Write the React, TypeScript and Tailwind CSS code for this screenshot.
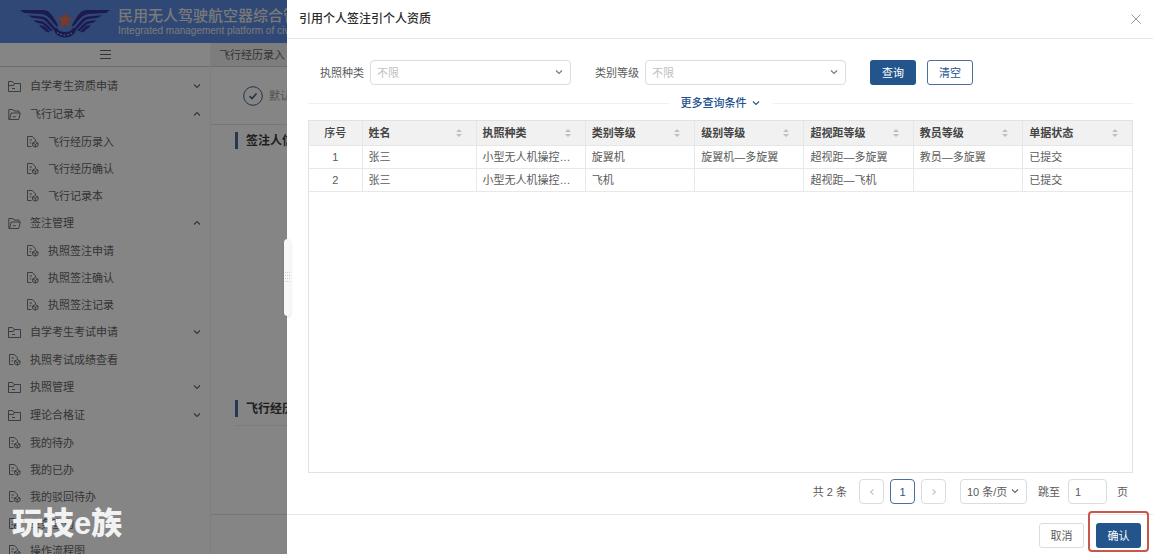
import React, { useState } from "react";

type MenuItem = {
  label: string;
  open?: boolean;
  folder?: boolean;
  children?: string[];
};

const menu: MenuItem[] = [
  { label: "自学考生资质申请", folder: true },
  {
    label: "飞行记录本",
    folder: true,
    open: true,
    children: ["飞行经历录入", "飞行经历确认", "飞行记录本"],
  },
  {
    label: "签注管理",
    folder: true,
    open: true,
    children: ["执照签注申请", "执照签注确认", "执照签注记录"],
  },
  { label: "自学考生考试申请", folder: true },
  { label: "执照考试成绩查看" },
  { label: "执照管理", folder: true },
  { label: "理论合格证", folder: true },
  { label: "我的待办" },
  { label: "我的已办" },
  { label: "我的驳回待办" },
  { label: "业务查询" },
  { label: "操作流程图" },
];

const columns = ["姓名", "执照种类", "类别等级", "级别等级", "超视距等级", "教员等级", "单据状态"];

const rows = [
  ["张三", "小型无人机操控员执照", "旋翼机", "旋翼机—多旋翼", "超视距—多旋翼", "教员—多旋翼", "已提交"],
  ["张三", "小型无人机操控员执照", "飞机", "", "超视距—飞机", "", "已提交"],
];

const Chevron = ({ dir = "down", className = "" }: { dir?: "down" | "up" | "left" | "right"; className?: string }) => {
  const paths = {
    down: "M2 3.500 5 6.500 8 3.500",
    up: "M2 6.500 5 3.500 8 6.500",
    left: "M6.500 2.500 3.500 5 6.500 7.500",
    right: "M3.500 2.500 6.500 5 3.500 7.500",
  };
  return (
    <svg viewBox="0 0 10 10" className={`h-2.5 w-2.5 shrink-0 ${className}`} fill="none" stroke="currentColor" strokeWidth="1.1">
      <path d={paths[dir]} />
    </svg>
  );
};

const FolderIcon = ({ open }: { open?: boolean }) => (
  <svg viewBox="0 0 13 13" className="h-[13px] w-[13px] shrink-0" fill="none" stroke="currentColor" strokeWidth="0.9">
    {open ? (
      <path d="M1.500 11.500h9.200l1.600-6.500H3.200L1.500 11.500H.8V1.500h4L6 3h5v2M4.800 8.800h3" />
    ) : (
      <path d="M.5 11.500v-10h4l1.500 2h6.500v8zM.5 5.500h5l1-2M4 8.500h3" />
    )}
  </svg>
);

const DocIcon = () => (
  <svg viewBox="0 0 13 13" className="h-[13px] w-[13px] shrink-0" fill="none" stroke="currentColor" strokeWidth="0.9">
    <path d="M5.500 11.500H1.500v-10h4.700L9.500 4.700V6M3.500 5h2.500M3.500 7.800h1.800" />
    <path d="M9.300 6.600 12 8v2.800l-2.700 1.400-2.700-1.400V8zM6.800 8.100l2.500 1.300 2.500-1.300M9.300 9.400v2.600" />
  </svg>
);

const Wing = () => (
  <>
    <path d="M0 1h23c6 0 9 5 12 10l3 5-1 2c-5-5-8-12-15-13L4 4z" />
    <path d="M8 6.200l14 1.300c6 1 9 7 13 11l-1 2c-5-3-7-9-12-10.500l-10-1.300z" />
    <path d="M14 11l8 1.200c4 1 7 6 11 8.800l-2 1.200c-4-2-6-6.400-10-7.700l-5-1z" />
    <path d="M19 15.800l4 1c3 1 4 4 7 5.700l-2 1c-3-1-5-4-7-5z" />
  </>
);

const Logo = () => (
  <svg viewBox="0 0 90 30" className="mt-1 h-[30px] w-[90px] shrink-0">
    <g fill="#34349a">
      <Wing />
      <g transform="matrix(-1 0 0 1 90 0)">
        <Wing />
      </g>
      <path d="M33.500 19l3.500 0c2 3 4.500 4 8 4s6-1 8-4h3.500c-1 6-5 9.500-11.500 9.500S34.500 25 33.500 19z" />
    </g>
    <path d="M37 23.500c5 3.500 11 3.500 16 0" fill="none" stroke="#8f9fd4" strokeWidth="1.200" strokeDasharray="2 1.500" />
    <path d="M45 3l2.300 5.500h5.700l-4.500 4 1.800 6.500-5.300-3.500-5.300 3.500 1.800-6.500-4.500-4h5.700z" fill="#ea6b4c" />
  </svg>
);

const SortIcon = () => (
  <svg viewBox="0 0 8 10" className="h-2.5 w-2 shrink-0" fill="#bfbfbf">
    <path d="M4 1l3 3H1zM4 9 1 6h6z" />
  </svg>
);

const SectionTitle = ({ children }: { children: React.ReactNode }) => (
  <h2 className="flex h-[17px] items-center gap-2 whitespace-nowrap text-xs font-bold text-[#3a3a3a]">
    <span className="h-full w-[3px] shrink-0 bg-[#4a6a9a]" />
    {children}
  </h2>
);

const FilterSelect = ({ id, label }: { id: string; label: string }) => (
  <div className="flex items-center gap-1.5">
    <label htmlFor={id} className="whitespace-nowrap">
      {label}
    </label>
    <div className="relative w-[201px]">
      <select
        id={id}
        className="block h-[25px] w-full appearance-none rounded-[4px] border border-[#dcdcdc] bg-white pr-6 pl-1.5 text-[#bfbfbf] outline-none"
      >
        <option>不限</option>
      </select>
      <Chevron className="pointer-events-none absolute top-[7px] right-[7px] text-[#777]" />
    </div>
  </div>
);

const Sidebar = () => (
  <aside className="w-[211px] shrink-0 border-r border-[#f4f4f4]">
    <div className="flex h-6 items-center justify-center border-b border-[#d4d4d4]">
      <button aria-label="折叠菜单">
        <svg viewBox="0 0 11 11" className="h-[11px] w-[11px]" stroke="#666" strokeWidth="1">
          <path d="M0 1.500h11M0 5.500h11M0 9.500h11" />
        </svg>
      </button>
    </div>
    <ul className="pt-[5px] text-[#666]">
      {menu.map((item) => (
        <li key={item.label}>
          <a href="#" className={`flex items-center gap-[9px] pr-2 pl-2 ${item.folder ? "h-7" : "h-[27px]"}`}>
            {item.folder ? <FolderIcon open={item.open} /> : <DocIcon />}
            <span className="flex-1">{item.label}</span>
            {item.folder && <Chevron dir={item.open ? "up" : "down"} />}
          </a>
          {item.children && (
            <ul>
              {item.children.map((child) => (
                <li key={child}>
                  <a href="#" className="flex h-[27px] items-center gap-[9px] pl-[26px]">
                    <DocIcon />
                    {child}
                  </a>
                </li>
              ))}
            </ul>
          )}
        </li>
      ))}
    </ul>
  </aside>
);

const Background = () => (
  <div className="flex h-full flex-col">
    <header className="flex h-[43px] shrink-0 items-center gap-2 bg-[#5b8ae0] pl-5 text-[#e8e8e8]">
      <Logo />
      <div className="whitespace-nowrap">
        <h1 className="text-[15px] leading-[18px] font-medium">民用无人驾驶航空器综合管理平台</h1>
        <p className="text-[10px] leading-3">Integrated management platform of civil unmanned aircraft</p>
      </div>
    </header>
    <div className="flex min-h-0 flex-1">
      <Sidebar />
      <main className="flex min-w-0 flex-1 flex-col">
        <nav className="flex h-6 shrink-0 items-center border-b border-[#d4d4d4] bg-[#f0f0f0] pl-2 text-[#666]">
          <a href="#">飞行经历录入</a>
        </nav>
        <div className="flex h-[58px] shrink-0 items-center gap-1.5 border-b border-[#e4e4e4] pl-8 text-[#999]">
          <svg viewBox="0 0 20 20" className="h-5 w-5" fill="none" stroke="#4a5f85">
            <circle cx="10" cy="10" r="9.300" />
            <path d="M6.500 10.200 9 12.500 13.500 7.500" strokeWidth="1.600" />
          </svg>
          默认审批流程
        </div>
        <div className="flex-1 pt-[7px] pl-6">
          <SectionTitle>签注人信息</SectionTitle>
          <div className="h-[251px]" />
          <SectionTitle>飞行经历信息</SectionTitle>
          <hr className="mt-2 border-[#eeeeee]" />
        </div>
        <div className="h-10 shrink-0 border-t border-[#e4e4e4]" />
      </main>
    </div>
  </div>
);

const ResultTable = () => (
  <table className="w-full table-fixed border-collapse text-left">
    <colgroup>
      <col className="w-[53px]" />
      <col className="w-[114px]" />
    </colgroup>
    <thead>
      <tr className="h-[24px] bg-[#f1f1f1] text-[#444]">
        <th className="border-r border-b border-[#e6e6e6] text-center font-medium">序号</th>
        {columns.map((col) => (
          <th key={col} className="border-r border-b border-[#e6e6e6] px-1.5 font-bold last:border-r-0">
            <div className="flex items-center justify-between pr-[7px]">
              {col}
              <SortIcon />
            </div>
          </th>
        ))}
      </tr>
    </thead>
    <tbody>
      {rows.map((row, index) => (
        <tr key={index} className="h-[23px]">
          <td className="border-r border-b border-[#e8e8e8] text-center">{index + 1}</td>
          {row.map((cell, i) => (
            <td key={i} className="truncate border-r border-b border-[#e8e8e8] pr-3.5 pl-1.5 last:border-r-0">
              {cell}
            </td>
          ))}
        </tr>
      ))}
    </tbody>
  </table>
);

const Pagination = () => {
  const [page, setPage] = useState("1");
  return (
    <div className="flex h-[25px] items-center justify-end pr-[5px]">
      <span className="mr-3">共 2 条</span>
      <div className="flex gap-1.5">
        <button aria-label="上一页" disabled className="flex h-[25px] w-[25px] items-center justify-center rounded-[4px] border border-[#dcdcdc] text-[#c4c4c4]">
          <Chevron dir="left" />
        </button>
        <button className="h-[25px] w-[25px] rounded-[4px] border border-[#4d6f9c] text-[#24548c]">1</button>
        <button aria-label="下一页" disabled className="flex h-[25px] w-[25px] items-center justify-center rounded-[4px] border border-[#dcdcdc] text-[#c4c4c4]">
          <Chevron dir="right" />
        </button>
      </div>
      <div className="relative ml-3.5 w-[67px]">
        <select aria-label="每页条数" className="block h-[25px] w-full appearance-none rounded-[4px] border border-[#dcdcdc] bg-white pl-1.5 outline-none">
          <option>10 条/页</option>
        </select>
        <Chevron className="pointer-events-none absolute top-[7px] right-[7px] text-[#666]" />
      </div>
      <label htmlFor="jump" className="mr-2 ml-[11px]">
        跳至
      </label>
      <input
        id="jump"
        value={page}
        onChange={(e) => setPage(e.target.value)}
        className="h-[25px] w-[39px] rounded-[4px] border border-[#dcdcdc] pl-1.5 outline-none"
      />
      <span className="ml-2.5">页</span>
    </div>
  );
};

const Drawer = () => (
  <section
    role="dialog"
    aria-label="引用个人签注引个人资质"
    className="absolute inset-y-0 right-0 left-[287px] flex flex-col bg-white text-[#5a5a5a]"
  >
    <header className="flex h-[39px] shrink-0 items-center justify-between border-b border-[#e8e8e8] pr-3 pl-3">
      <h2 className="text-xs font-medium text-[#2a2a2a]">引用个人签注引个人资质</h2>
      <button aria-label="关闭">
        <svg viewBox="0 0 10 10" className="h-2.5 w-2.5" stroke="#999" strokeWidth="1">
          <path d="M.5.5l9 9M9.500.5l-9 9" />
        </svg>
      </button>
    </header>

    <div className="flex min-h-0 flex-1 flex-col pt-[21px] pr-5 pb-2.5 pl-[21px]">
      <form className="flex items-center pl-3" onSubmit={(e) => e.preventDefault()}>
        <div className="flex gap-6">
          <FilterSelect id="license" label="执照种类" />
          <FilterSelect id="category" label="类别等级" />
        </div>
        <div className="ml-6 flex gap-[11px]">
          <button className="h-[25px] w-[46px] rounded-[3px] bg-[#24548c] text-white">查询</button>
          <button type="reset" className="h-[25px] w-[46px] rounded-[3px] border border-[#4d6f9c] text-[#24548c]">
            清空
          </button>
        </div>
      </form>

      <div className="mt-2.5 flex h-4 items-center gap-3">
        <span className="h-px flex-1 bg-[#f0f0f0]" />
        <button className="flex items-center gap-1 font-medium text-[#24548c]">
          更多查询条件
          <Chevron />
        </button>
        <span className="h-px flex-1 bg-[#f0f0f0]" />
      </div>

      <div className="mt-[9px] min-h-0 flex-1 border border-[#e2e2e2]">
        <ResultTable />
      </div>
      <div className="mt-1.5">
        <Pagination />
      </div>
    </div>

    <footer className="flex h-10 shrink-0 items-start justify-end gap-3 border-t border-[#e8e8e8] pt-2 pr-3">
      <button className="h-[25px] w-[45px] rounded-[3px] border border-[#dcdcdc]">取消</button>
      <div className="relative">
        <button className="h-[25px] w-[45px] rounded-[3px] bg-[#24548c] text-white">确认</button>
        <span className="pointer-events-none absolute -top-3 -right-2 -bottom-1 -left-2 rounded-[4px] border-2 border-[#c8564a]" />
      </div>
    </footer>

    {/* resize handle */}
    <div className="absolute top-[239px] -left-[3px] flex h-[77px] w-[7px] items-center justify-center rounded-[4px] bg-[#f7f7f7] shadow-sm">
      <svg viewBox="0 0 5 12" className="h-3 w-[5px]" fill="#ccc">
        <path d="M0 0h1v1H0zM2 0h1v1H2zM4 0h1v1H4zM0 3h1v1H0zM2 3h1v1H2zM4 3h1v1H4zM0 6h1v1H0zM2 6h1v1H2zM4 6h1v1H4zM0 9h1v1H0zM2 9h1v1H2zM4 9h1v1H4z" />
      </svg>
    </div>
  </section>
);

export default function App() {
  return (
    <div className="relative h-screen overflow-hidden bg-white font-['Liberation_Sans','Noto_Sans_CJK_SC',sans-serif] text-[11px] leading-4">
      <Background />
      <div className="absolute inset-0 bg-black/48" />
      <Drawer />
      <div className="absolute bottom-3.5 left-3 text-[31px] leading-8 font-black text-[#f2f2f2]">玩技e族</div>
    </div>
  );
}
